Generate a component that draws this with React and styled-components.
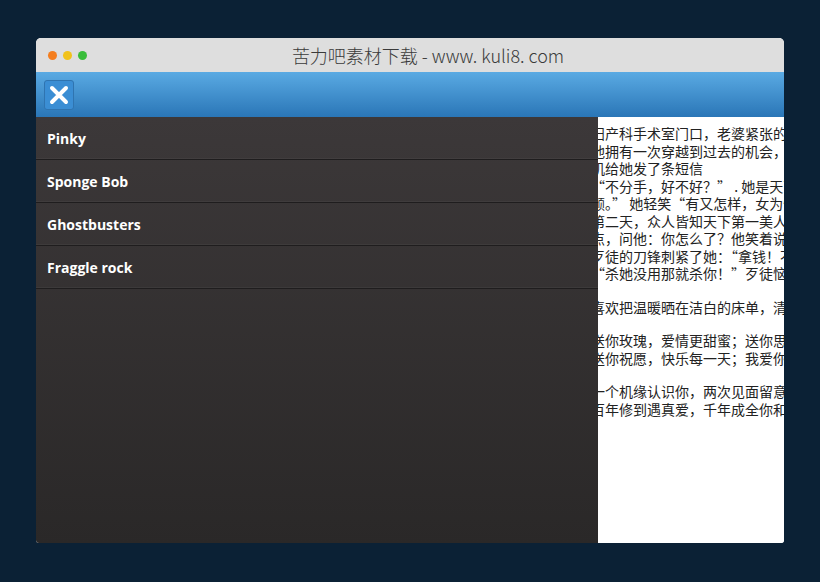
import React from "react";
import styled, { createGlobalStyle } from "styled-components";

const GlobalStyle = createGlobalStyle`
  html, body {
    margin: 0;
    padding: 0;
    background: #0b2135;
  }
  body {
    font-family: "Open Sans", "Noto Sans CJK SC", sans-serif;
  }
`;

const menuItems = ["Pinky", "Sponge Bob", "Ghostbusters", "Fraggle rock"];

const paragraphs = [
  [
    "妇产科手术室门口，老婆紧张的看着我",
    "他拥有一次穿越到过去的机会，他回到",
    "机给她发了条短信",
    "“不分手，好不好？” . 她是天下第一",
    "颜。” 她轻笑“有又怎样，女为悦己者",
    "第二天，众人皆知天下第一美人毁了容",
    "点，问他：你怎么了？他笑着说没什么",
    "歹徒的刀锋刺紧了她：“拿钱！不然杀",
    "“杀她没用那就杀你！”歹徒恼羞成怒",
  ],
  ["喜欢把温暖晒在洁白的床单，清香的味道"],
  ["送你玫瑰，爱情更甜蜜；送你思念，牵挂", "送你祝愿，快乐每一天；我爱你，一生一"],
  ["一个机缘认识你，两次见面留意你，三番", "百年修到遇真爱，千年成全你和我，万年"],
];

export default function App() {
  return (
    <>
      <GlobalStyle />
      <Page>
        <Window>
          <TitleBar>
            <Lights>
              <Light color="#f47e1f" />
              <Light color="#f1c21b" />
              <Light color="#39bd3a" />
            </Lights>
            <Title>苦力吧素材下载 - www. kuli8. com</Title>
          </TitleBar>
          <Header>
            <CloseButton aria-label="close">
              <svg width="20" height="20" viewBox="0 0 20 20">
                <path
                  d="M3 3 L17 17 M17 3 L3 17"
                  stroke="#fff"
                  strokeWidth="4"
                  strokeLinecap="round"
                />
              </svg>
            </CloseButton>
          </Header>
          <Body>
            <Menu>
              {menuItems.map((item) => (
                <MenuItem key={item}>{item}</MenuItem>
              ))}
            </Menu>
            <Content>
              <Article>
                {paragraphs.map((lines, i) => (
                  <Paragraph key={i}>
                    {lines.map((line) => (
                      <Line key={line}>{line}</Line>
                    ))}
                  </Paragraph>
                ))}
              </Article>
            </Content>
          </Body>
        </Window>
      </Page>
    </>
  );
}

const Page = styled.div`
  width: 820px;
  height: 582px;
  padding: 38px 36px 0 36px;
  box-sizing: border-box;
`;

const Window = styled.div`
  width: 748px;
  height: 505px;
  display: flex;
  flex-direction: column;
  border-radius: 5px 5px 3px 3px;
  overflow: hidden;
  background: #fff;
`;

const TitleBar = styled.div`
  height: 34px;
  flex: none;
  display: flex;
  align-items: center;
  background: #dedede;
  padding: 0 12px;
`;

const Lights = styled.div`
  display: flex;
  gap: 6px;
  width: 40px;
  flex: none;
`;

const Light = styled.span`
  width: 9px;
  height: 9px;
  border-radius: 50%;
  background: ${(p) => p.color};
`;

const Title = styled.div`
  flex: 1;
  text-align: center;
  padding-right: 4px;
  font-family: "Noto Sans CJK SC", "DejaVu Sans", sans-serif;
  font-weight: 300;
  font-size: 18px;
  color: #3a3a3a;
  white-space: pre;
`;

const Header = styled.div`
  height: 45px;
  flex: none;
  display: flex;
  align-items: center;
  padding: 0 8px;
  background: linear-gradient(#5aaae3, #2a76b7);
  box-sizing: border-box;
`;

const CloseButton = styled.button`
  width: 30px;
  height: 30px;
  padding: 0;
  display: flex;
  align-items: center;
  justify-content: center;
  background: #3b8ed4;
  border: 1px solid #2f74b0;
  border-radius: 3px;
  cursor: pointer;
`;

const Body = styled.div`
  flex: 1;
  display: flex;
  min-height: 0;
`;

const Menu = styled.nav`
  width: 562px;
  flex: none;
  background: linear-gradient(#3c3839, #2a2828);
`;

const MenuItem = styled.div`
  height: 42px;
  display: flex;
  align-items: center;
  padding: 0 11px;
  color: #fff;
  font-family: "Open Sans", sans-serif;
  font-weight: 700;
  font-size: 14px;
  border-bottom: 1px solid #1f1d1e;
  box-shadow: inset 0 -1px 0 rgba(255, 255, 255, 0.04);
  cursor: pointer;
`;

const Content = styled.main`
  flex: 1;
  overflow: hidden;
  background: #fff;
`;

const Article = styled.div`
  padding-top: 8px;
  margin-left: -7px;
  font-family: "Noto Sans CJK SC", sans-serif;
  font-size: 14px;
  line-height: 17.5px;
  color: #222;
`;

const Paragraph = styled.div`
  margin-bottom: 16px;
`;

const Line = styled.div`
  white-space: nowrap;
`;
